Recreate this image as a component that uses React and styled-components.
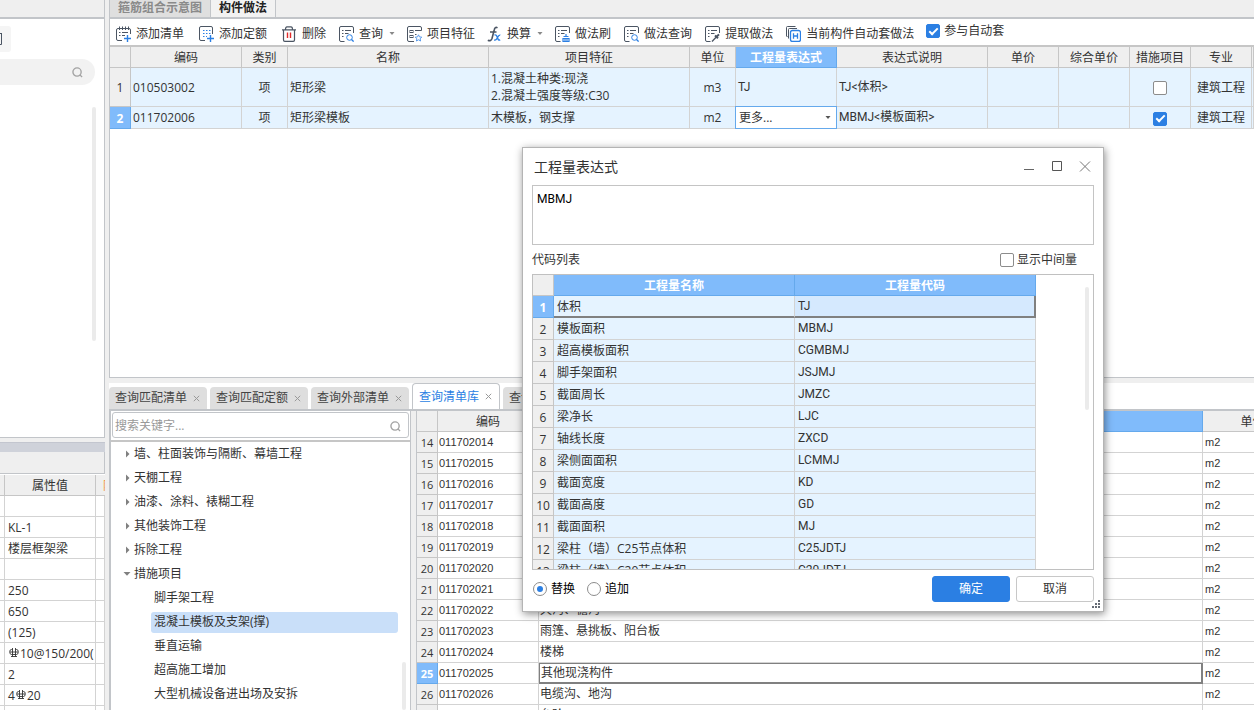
import React, { useState } from "react";
import styled, { createGlobalStyle, css } from "styled-components";

const uiFont = '"Open Sans", "Noto Sans CJK SC", sans-serif';
const codeFont = 'Roboto, "Noto Sans CJK SC", sans-serif';
const gridFont = '"Liberation Sans", "Noto Sans CJK SC", sans-serif';

const color = {
  chrome: "#efefef",
  frame: "#c2c5c9",
  line: "#d3d3d3",
  headLine: "#c6c6c6",
  row: "#e5f3ff",
  active: "#80bbfb",
  activeLine: "#65a9ec",
  primary: "#2b7fe3",
  text: "#333333",
  icon: "#4b5563",
};

const GlobalStyle = createGlobalStyle`
  *, *::before, *::after { box-sizing: border-box; }
  body { margin: 0; overflow: hidden; }
  body, button, input, select, textarea {
    font-family: ${uiFont};
    font-size: 12px;
    line-height: 16px;
    color: ${color.text};
  }
  button { border: 0; padding: 0; background: none; white-space: nowrap; }
`;

const Page = styled.div`
  display: grid;
  grid-template-columns: 105px minmax(0, 1fr);
  column-gap: 4px;
  height: 100vh;
  overflow: hidden;
  background: ${color.chrome};
`;

/* ---------- left column ---------- */
const Side = styled.aside`
  display: grid;
  grid-template-rows: minmax(0, 438fr) minmax(0, 268fr);
  row-gap: 4px;
  min-height: 0;
`;
const SidePanel = styled.section`
  display: flex;
  flex-direction: column;
  overflow: hidden;
  background: #fff;
  border: solid ${color.frame};
  border-width: 0 1px 1px 0;
`;
const SideStrip = styled.div`
  flex: none;
  height: 19px;
  background: ${color.chrome};
  border-bottom: 2px solid ${color.frame};
`;
const SideTools = styled.div`
  display: flex;
  padding: 7px 0;
`;
const SideToolButton = styled.button`
  display: flex;
  align-items: center;
  width: 11px;
  height: 26px;
  border-radius: 0 3px 3px 0;
  background: #f5f5f5;
`;
const SideSearch = styled.label`
  display: flex;
  align-items: center;
  flex: none;
  height: 26px;
  margin-right: 9px;
  padding-right: 12px;
  background: #f2f2f2;
  border-radius: 0 13px 13px 0;
  input {
    flex: 1;
    min-width: 0;
    border: 0;
    background: none;
    outline: none;
  }
`;
const SideScroll = styled.div`
  flex: 1;
  display: flex;
  justify-content: flex-end;
  padding: 22px 8px 96px 0;
`;
const Thumb = styled.div`
  width: 4px;
  height: ${(p) => p.$length || "100%"};
  border-radius: 2px;
  background: #ebebeb;
`;
const SideProps = styled.section`
  overflow: hidden;
  background: #fff;
`;
const Band = styled.div`
  height: 10px;
  background: #cfd2da;
  border-top: 1px solid #c3c6cf;
`;
const BandBody = styled.div`
  height: 22px;
  border: solid ${color.frame};
  border-width: 0 1px 1px 0;
  margin-bottom: 1px;
  background: ${color.chrome};
`;

/* ---------- data tables ---------- */
const Table = styled.table`
  width: ${(p) => p.$width || "100%"};
  table-layout: fixed;
  border-collapse: separate;
  border-spacing: 0;
  font-family: ${(p) => p.$font || uiFont};
  font-size: 12px;
`;
const Head = styled.th`
  height: ${(p) => p.$h || 21}px;
  padding: 2px 0 0;
  overflow: hidden;
  white-space: nowrap;
  font-family: ${uiFont};
  font-size: 12px;
  font-weight: ${(p) => (p.$active ? 700 : 400)};
  color: ${(p) => (p.$active ? "#fff" : color.text)};
  background: ${(p) => (p.$active ? color.active : color.chrome)};
  border: solid ${(p) => (p.$active ? color.activeLine : color.headLine)};
  border-width: 0 1px 1px 0;
`;
const RequiredHead = styled(Head)`
  padding-left: 7px;
  text-align: left;
  color: #f0963c;
  border-right: 0;
`;
const RowHead = styled(Head)`
  font-size: ${(p) => p.$size || "12px"};
`;
const Cell = styled.td`
  height: ${(p) => p.$h || 21}px;
  padding: 0 0 0 ${(p) => p.$pad ?? 2}px;
  overflow: hidden;
  white-space: nowrap;
  line-height: 17px;
  text-align: ${(p) => (p.$center ? "center" : "left")};
  background: ${(p) => p.$bg || "#fff"};
  border: solid ${color.line};
  border-width: 0 1px 1px 0;
  ${(p) =>
    p.$code &&
    css`
      font-family: ${codeFont};
    `}
  ${(p) =>
    p.$current &&
    css`
      border-color: #808080;
      border-width: 1px 2px 2px 1px;
    `}
  ${(p) =>
    p.$under &&
    css`
      border-bottom: 2px solid #808080;
    `}
  ${(p) =>
    p.$edge &&
    css`
      border-right: 2px solid #808080;
    `}
`;
const Code = styled(Cell)`
  font-size: 11px;
`;
const DropCell = styled(Cell)`
  position: relative;
  padding: 0;
  overflow: visible;
  background: #fff;
  border-color: ${color.activeLine};
  box-shadow: -1px -1px 0 ${color.activeLine}, 0 -1px 0 ${color.activeLine}, -1px 0 0 ${color.activeLine};
`;
const DropField = styled.div`
  display: flex;
  align-items: center;
  padding-right: 5px;
  select {
    flex: 1;
    min-width: 0;
    height: 20px;
    padding: 0 0 0 3px;
    border: 0;
    outline: none;
    appearance: none;
    background: transparent;
  }
`;

/* ---------- controls ---------- */
const Check = styled.input`
  appearance: none;
  display: inline-grid;
  place-items: center;
  width: 14px;
  height: 14px;
  margin: 0;
  border: 1px solid #8c8c8c;
  border-radius: 2px;
  background: #fff;
  vertical-align: middle;
  &:checked {
    border-color: ${color.primary};
    background: ${color.primary};
  }
  &:checked::after {
    content: "";
    width: 9px;
    height: 5px;
    border: solid #fff;
    border-width: 0 0 2px 2px;
    transform: translateY(-1px) rotate(-45deg);
  }
`;
const Radio = styled.input`
  appearance: none;
  display: grid;
  place-items: center;
  width: 14px;
  height: 14px;
  margin: 0;
  border: 1px solid #8c8c8c;
  border-radius: 50%;
  background: #fff;
  &:checked::after {
    content: "";
    width: 6px;
    height: 6px;
    border-radius: 50%;
    background: ${color.primary};
  }
`;
const Field = styled.label`
  display: flex;
  align-items: center;
  gap: ${(p) => p.$gap || 4}px;
  color: ${(p) => p.$color || color.text};
`;

/* ---------- main area ---------- */
const Main = styled.main`
  display: grid;
  grid-template-rows: minmax(0, 378fr) minmax(0, 327fr);
  row-gap: 5px;
  min-width: 0;
  min-height: 0;
`;
const TopPane = styled.section`
  display: flex;
  flex-direction: column;
  overflow: hidden;
  background: #fff;
  border: solid ${color.frame};
  border-width: 0 0 1px 1px;
`;
const ViewTabs = styled.div`
  flex: none;
  display: flex;
  height: 19px;
  background: ${color.chrome};
  border-bottom: 2px solid ${color.frame};
`;
const ViewTab = styled.button`
  padding: 0 8px 4px;
  font-weight: 700;
  border-right: 1px solid ${color.frame};
  color: ${(p) => (p.$on ? "#222" : "#8a8a8a")};
  background: ${(p) => (p.$on ? "#f2f2f2" : "#dfdfdf")};
`;
const Toolbar = styled.div`
  flex: none;
  display: flex;
  align-items: center;
  gap: 12px;
  height: 28px;
  padding: 3px 0 0 5px;
  white-space: nowrap;
  border-bottom: 2px solid ${color.headLine};
`;
const ToolGroup = styled.div`
  display: flex;
  gap: ${(p) => p.$gap}px;
`;
const ToolButton = styled.button`
  display: flex;
  align-items: center;
  gap: 5px;
  height: 20px;
`;
const ToolArrow = styled.span`
  padding-left: 1px;
  display: flex;
`;
const ToolCheck = styled(Field)`
  align-self: flex-start;
  padding-top: 1px;
`;

const BottomPane = styled.section`
  display: flex;
  flex-direction: column;
  min-height: 0;
  overflow: hidden;
  background: #fff;
`;
const QueryTabs = styled.div`
  flex: none;
  display: flex;
  align-items: flex-end;
  gap: 3px;
  height: 28px;
  border-bottom: 2px solid ${color.frame};
`;
const QueryTab = styled.div`
  display: flex;
  align-items: center;
  gap: 6px;
  height: ${(p) => (p.$on ? 26 : 22)}px;
  padding: 0 7px 0 6px;
  border-radius: 4px 4px 0 0;
  background: ${(p) => (p.$on ? "#fff" : "#dedede")};
  border: ${(p) => (p.$on ? `1px solid ${color.frame}` : "0")};
  border-bottom: 0;
  button { color: ${(p) => (p.$on ? color.primary : "#444")}; display: flex; }
`;
const Panes = styled.div`
  flex: 1;
  display: grid;
  grid-template-columns: 302px minmax(0, 1fr);
  gap: 5px;
  min-height: 0;
  background: ${color.chrome};
`;
const TreePane = styled.div`
  display: flex;
  flex-direction: column;
  overflow: hidden;
  background: #fff;
  border: solid ${color.frame};
  border-width: 0 1px 0 2px;
`;
const SearchRow = styled.div`
  flex: none;
  padding: 1px 1px 2px;
  border-bottom: 2px solid ${color.headLine};
`;
const SearchBox = styled.label`
  display: flex;
  align-items: center;
  height: 26px;
  padding: 2px 7px 0 2px;
  border: 1px solid ${color.frame};
  border-radius: 3px;
  input {
    flex: 1;
    min-width: 0;
    padding: 0;
    border: 0;
    outline: none;
  }
  input::placeholder { color: #999; opacity: 1; }
`;
const TreeArea = styled.div`
  display: flex;
  flex: 1;
  min-height: 0;
  overflow: hidden;
  padding-right: 4px;
`;
const Tree = styled.ul`
  flex: 1;
  margin: 0;
  padding: 0 4px 0 12px;
  list-style: none;
`;
const TreeItem = styled.li`
  display: flex;
  align-items: center;
  height: 24px;
  padding-left: ${(p) => (p.$child ? 28 : 0)}px;
`;
const TreeLabel = styled.span`
  flex: 1;
  display: flex;
  align-items: center;
  height: 21px;
  padding-left: 3px;
  border-radius: 3px;
  background: ${(p) => (p.$on ? "#c9dff9" : "none")};
`;
const TreeThumb = styled.div`
  display: flex;
  align-items: flex-end;
`;
const ResultPane = styled.div`
  overflow: hidden;
  background: #fff;
  border-left: 1px solid ${color.frame};
`;

/* ---------- dialog ---------- */
const Dialog = styled.section`
  position: absolute;
  left: 522px;
  top: 147px;
  width: 582px;
  padding: 0 9px 9px;
  background: #fff;
  border: 1px solid #b4b4b4;
  box-shadow: 1px 2px 8px rgba(0, 0, 0, 0.45);
`;
const TitleBar = styled.header`
  display: flex;
  align-items: center;
  justify-content: space-between;
  height: 37px;
  padding: 0 3px 0 2px;
  h2 { margin: 0; font-size: 14px; font-weight: 400; line-height: 20px; }
`;
const WindowButtons = styled.div`
  display: flex;
  gap: 16px;
  button { display: flex; }
`;
const Expression = styled.textarea`
  display: block;
  width: 100%;
  height: 60px;
  padding: 5px 4px;
  resize: none;
  font-family: ${codeFont};
  color: #000;
  border: 1px solid #c4c4c4;
  border-radius: 0;
  outline: none;
`;
const ListBar = styled.div`
  display: flex;
  align-items: center;
  justify-content: space-between;
  height: 29px;
  padding-right: 17px;
`;
const CodeList = styled.div`
  display: flex;
  justify-content: space-between;
  height: 296px;
  overflow: hidden;
  border: 1px solid #c0c0c0;
`;
const CodeScroll = styled.div`
  padding: 12px 4px 0 0;
`;
const Footer = styled.footer`
  display: flex;
  align-items: center;
  justify-content: space-between;
  padding-top: 6px;
`;
const Options = styled.div`
  display: flex;
  gap: 12px;
  padding-left: 1px;
`;
const Actions = styled.div`
  display: flex;
  gap: 6px;
`;
const ActionButton = styled.button`
  width: 78px;
  height: 26px;
  border-radius: 3px;
  border: 1px solid ${(p) => (p.$primary ? color.primary : "#c8c8c8")};
  background: ${(p) => (p.$primary ? color.primary : "#fff")};
  color: ${(p) => (p.$primary ? "#fff" : color.text)};
`;
const Grip = styled.svg`
  position: absolute;
  right: 3px;
  bottom: 3px;
`;

/* ---------- icons ---------- */
const Icon = ({ children, size = 16 }) => (
  <svg width={size} height={size} viewBox={`0 0 ${size} ${size}`} fill="none" stroke={color.icon} aria-hidden="true">
    {children}
  </svg>
);
const Lens = () => (
  <svg width="11" height="11" viewBox="0 0 12 12" fill="none" stroke="#a3a3a3" strokeWidth="1.5" aria-hidden="true">
    <circle cx="5.5" cy="5.5" r="4.5" />
    <path d="M8.6 8.6 L11 11" />
  </svg>
);
const sheet = "M6.5 15.5 H3 Q1.5 15.5 1.5 14 V2 Q1.5 .5 3 .5 H14 Q15.5 .5 15.5 2 V7";
const lines = "M4 4.5 H5.5 M7 4.5 H13 M4 7.5 H5.5 M7 7.5 H10.5 M4 10.5 H5.5";
const icons = {
  addList: (
    <Icon>
      <path d="M7 14.5 H3 Q1.5 14.5 1.5 13 V4 Q1.5 2.5 3 2.5 H14 Q15.5 2.5 15.5 4 V8" />
      <path d="M4.5 .5 V4 M7.5 .5 V4 M10.5 .5 V4 M13.5 .5 V4" />
      <path d="M4 6.5 H5.5 M7 6.5 H13 M4 9.5 H5.5 M7 9.5 H10" />
      <path d="M12.5 9 V16 M9 12.5 H16" stroke={color.primary} strokeWidth="1.4" />
    </Icon>
  ),
  addQuota: (
    <Icon>
      <path d="M7 14.5 H3 Q1.5 14.5 1.5 13 V2 Q1.5 .5 3 .5 H13 Q14.5 .5 14.5 2 V8" />
      <path d="M5 4.5 H13 M5 7.5 H13 M5 10.5 H9" strokeDasharray="1.5 1.5" stroke={color.primary} />
      <path d="M12.5 9 V16 M9 12.5 H16" stroke={color.primary} strokeWidth="1.4" />
    </Icon>
  ),
  remove: (
    <Icon>
      <path d="M4.5 3.5 Q4.5 .8 6 .8 H10 Q11.5 .8 11.5 3.5 M1 3.8 H15 M2.5 4 V14 Q2.5 15.3 3.8 15.3 H12.2 Q13.5 15.3 13.5 14 V4" strokeWidth="1.2" />
      <path d="M6.5 6.5 V12 M9.5 6.5 V12" stroke="#e02b2b" strokeWidth="1.4" />
    </Icon>
  ),
  query: (
    <Icon>
      <path d={sheet} />
      <path d={lines} />
      <circle cx="11.5" cy="11.5" r="2.8" fill="#fff" stroke={color.primary} />
      <path d="M13.5 13.5 L15.6 15.6" stroke={color.primary} strokeWidth="1.3" />
    </Icon>
  ),
  feature: (
    <Icon>
      <path d="M8 15.5 H3 Q1.5 15.5 1.5 14 V2 Q1.5 .5 3 .5 H14 Q15.5 .5 15.5 2 V4.5 H9" />
      <rect x="4" y="4.5" width="3" height="2" />
      <rect x="4" y="9.5" width="3" height="2" />
      <path d="M9 8.5 H10.5" />
      <path d="M12.5 8.8 L13.5 10.9 L15.8 11.2 L14.1 12.7 L14.6 15 L12.5 13.8 L10.4 15 L10.9 12.7 L9.2 11.2 L11.5 10.9 Z" fill="#fff" stroke="#5b9bea" />
    </Icon>
  ),
  convert: (
    <Icon>
      <path d="M11.5 1.8 Q9 .2 8.2 4 L6 12.5 Q5 15.6 1.8 14.2 M4 6 H10.5" strokeWidth="1.6" />
      <path d="M8.5 9 Q10.3 8.5 11 10.5 L12 13 Q12.6 14.6 14.2 13.8 M14.3 9.2 Q13 8.6 11.5 11.5 Q10 14.8 8.2 13.8" stroke={color.primary} strokeWidth="1.4" />
    </Icon>
  ),
  brush: (
    <Icon>
      <path d={sheet} />
      <path d={lines} />
      <path d="M12 8 V10.5 M9.5 10.5 H14.5 M9 15.5 V12.5 H15 V15.5 Z M11 13 V15 M13 13 V15" stroke={color.primary} strokeWidth="1.2" />
    </Icon>
  ),
  extract: (
    <Icon>
      <path d={sheet} />
      <path d={lines} />
      <path d="M8 15.5 L12.8 10.5" strokeWidth="1.3" />
      <path d="M11 9.5 L14 12.2 M12.5 10.8 L15 8.4" strokeWidth="2" />
    </Icon>
  ),
  auto: (
    <Icon>
      <path d="M2.5 10.5 H2 Q1.5 10.5 1.5 10 V1.5 Q1.5 .5 2.5 .5 H10.5 M3.5 12.5 V3.5 Q3.5 2.5 4.5 2.5 H12" />
      <rect x="5.5" y="4.5" width="10" height="11" rx="2" stroke={color.primary} strokeWidth="1.3" />
      <path d="M8.5 7.3 V12.8 M12.5 7.3 V12.8 M8.5 10 H12.5" stroke={color.primary} strokeWidth="1.3" />
    </Icon>
  ),
};
const DownArrow = ({ tone = "#888" }) => (
  <svg width="6" height="4" viewBox="0 0 6 4" fill={tone} aria-hidden="true">
    <path d="M.5 0 H5.5 L3 3 Z" />
  </svg>
);
const Cross = () => (
  <svg width="7" height="7" viewBox="0 0 7 7" stroke="#999" fill="none" aria-hidden="true">
    <path d="M.8 .8 L6.2 6.2 M6.2 .8 L.8 6.2" />
  </svg>
);
const TreeArrow = ({ open }) => (
  <svg width="8" height="8" viewBox="0 0 8 8" fill="#808080" aria-hidden="true">
    {open ? <path d="M.5 2 H7.5 L4 5.8 Z" /> : <path d="M3 .5 L6.5 4 L3 7.5 Z" />}
  </svg>
);
const RebarMark = styled.svg`
  margin: 0 1px;
`;
const Rebar = () => (
  <RebarMark width="10" height="10" viewBox="0 0 10 10" fill="none" stroke={color.text} strokeWidth=".9" aria-hidden="true">
    <path d="M3.5 1.5 H2.5 Q.7 1.5 .7 3.8 Q.7 6.5 2.5 6.5 H7.5 Q9.3 6.5 9.3 3.8 Q9.3 1.5 7.5 1.5 H6.5 M1 4 H9 M3.5 0 V8.5 M6.5 0 V8.5 M2 8.5 H8" />
  </RebarMark>
);

/* ---------- data ---------- */
const properties = [
  "",
  "KL-1",
  "楼层框架梁",
  "",
  "250",
  "650",
  "(125)",
  <><Rebar />10@150/200(</>,
  "2",
  <>4<Rebar />20</>,
  <>4<Rebar />20</>,
];
const columns = [
  ["", 21],
  ["编码", 111],
  ["类别", 46],
  ["名称", 201],
  ["项目特征", 201],
  ["单位", 46],
  ["工程量表达式", 101],
  ["表达式说明", 151],
  ["单价", 71],
  ["综合单价", 71],
  ["措施项目", 61],
  ["专业", 61],
  ["", null],
];
const tree = [
  ["墙、柱面装饰与隔断、幕墙工程"],
  ["天棚工程"],
  ["油漆、涂料、裱糊工程"],
  ["其他装饰工程"],
  ["拆除工程"],
  ["措施项目", "open"],
  ["脚手架工程", "child"],
  ["混凝土模板及支架(撑)", "child"],
  ["垂直运输", "child"],
  ["超高施工增加", "child"],
  ["大型机械设备进出场及安拆", "child"],
];
const listNames = {
  22: "天沟、檐沟",
  23: "雨篷、悬挑板、阳台板",
  24: "楼梯",
  25: "其他现浇构件",
  26: "电缆沟、地沟",
  27: "台阶",
};
const results = Array.from({ length: 14 }, (_, i) => i + 14);
const codes = [
  ["体积", "TJ"],
  ["模板面积", "MBMJ"],
  ["超高模板面积", "CGMBMJ"],
  ["脚手架面积", "JSJMJ"],
  ["截面周长", "JMZC"],
  ["梁净长", "LJC"],
  ["轴线长度", "ZXCD"],
  ["梁侧面面积", "LCMMJ"],
  ["截面宽度", "KD"],
  ["截面高度", "GD"],
  ["截面面积", "MJ"],
  ["梁柱（墙）C25节点体积", "C25JDTJ"],
  ["梁柱（墙）C20节点体积", "C20JDTJ"],
];

const Tool = ({ icon, label, arrow }) => (
  <ToolButton type="button">
    {icons[icon]}
    {label}
    {arrow && <ToolArrow><DownArrow /></ToolArrow>}
  </ToolButton>
);

const CloseTab = ({ label, on }) => (
  <QueryTab $on={on}>
    <button type="button">{label}</button>
    <button type="button" aria-label={`关闭${label}`}><Cross /></button>
  </QueryTab>
);

function SideColumn() {
  return (
    <Side>
      <SidePanel>
        <SideStrip />
        <SideTools>
          <SideToolButton type="button" aria-label="复制">
            <svg width="3" height="14" viewBox="0 0 3 14" fill="none" stroke={color.icon} aria-hidden="true">
              <path d="M0 1.5 H2 M1.5 1 V12.5 H0" />
            </svg>
          </SideToolButton>
        </SideTools>
        <SideSearch>
          <input type="text" aria-label="搜索构件" />
          <Lens />
        </SideSearch>
        <SideScroll><Thumb /></SideScroll>
      </SidePanel>
      <SideProps>
        <Band />
        <BandBody />
        <Table>
          <colgroup>
            <col style={{ width: 5 }} />
            <col style={{ width: 91 }} />
            <col />
          </colgroup>
          <thead>
            <tr><Head /><Head>属性值</Head><RequiredHead>附加</RequiredHead></tr>
          </thead>
          <tbody>
            {properties.map((value, i) => (
              <tr key={i}><Cell /><Cell $pad={3}>{value}</Cell><Cell /></tr>
            ))}
          </tbody>
        </Table>
      </SideProps>
    </Side>
  );
}

function PracticeTable() {
  const [measure, setMeasure] = useState([false, true]);
  const toggle = (i) => setMeasure(measure.map((m, k) => (k === i ? !m : m)));
  const box = (i) => (
    <Check type="checkbox" aria-label="措施项目" checked={measure[i]} onChange={() => toggle(i)} />
  );
  return (
    <Table>
      <colgroup>
        {columns.map(([, w], i) => <col key={i} style={w ? { width: w } : undefined} />)}
      </colgroup>
      <thead>
        <tr>
          {columns.map(([name], i) => <Head key={i} $active={i === 6}>{name}</Head>)}
        </tr>
      </thead>
      <tbody>
        <tr>
          <RowHead $h={39}>1</RowHead>
          <Cell $bg={color.row}>010503002</Cell>
          <Cell $bg={color.row} $center $pad={0}>项</Cell>
          <Cell $bg={color.row}>矩形梁</Cell>
          <Cell $bg={color.row}>1.混凝土种类:现浇<br />2.混凝土强度等级:C30</Cell>
          <Cell $bg={color.row} $center $pad={0}>m3</Cell>
          <Cell $bg={color.row} $code>TJ</Cell>
          <Cell $bg={color.row} $code>TJ&lt;体积&gt;</Cell>
          <Cell $bg={color.row} />
          <Cell $bg={color.row} />
          <Cell $bg={color.row} $center $pad={0}>{box(0)}</Cell>
          <Cell $bg={color.row} $center $pad={0}>建筑工程</Cell>
          <Cell $bg={color.row} />
        </tr>
        <tr>
          <RowHead $h={22} $active>2</RowHead>
          <Cell $bg={color.row}>011702006</Cell>
          <Cell $bg={color.row} $center $pad={0}>项</Cell>
          <Cell $bg={color.row}>矩形梁模板</Cell>
          <Cell $bg={color.row}>木模板，钢支撑</Cell>
          <Cell $bg={color.row} $center $pad={0}>m2</Cell>
          <DropCell>
            <DropField>
              <select aria-label="工程量表达式"><option>更多...</option></select>
              <DownArrow tone="#555" />
            </DropField>
          </DropCell>
          <Cell $bg={color.row} $code>MBMJ&lt;模板面积&gt;</Cell>
          <Cell $bg={color.row} />
          <Cell $bg={color.row} />
          <Cell $bg={color.row} $center $pad={0}>{box(1)}</Cell>
          <Cell $bg={color.row} $center $pad={0}>建筑工程</Cell>
          <Cell $bg={color.row} />
        </tr>
      </tbody>
    </Table>
  );
}

function ResultTable() {
  return (
    <Table $width="calc(100% + 49px)" $font={gridFont}>
      <colgroup>
        <col style={{ width: 21 }} />
        <col style={{ width: 101 }} />
        <col />
        <col style={{ width: 100 }} />
      </colgroup>
      <thead>
        <tr><Head /><Head>编码</Head><Head $active>名称</Head><Head>单位</Head></tr>
      </thead>
      <tbody>
        {results.map((n) => (
          <tr key={n}>
            <RowHead $size="11px" $active={n === 25}>{n}</RowHead>
            <Code $pad={1}>0117020{n}</Code>
            <Cell $pad={1} $current={n === 25}>{listNames[n] || ""}</Cell>
            <Code>m2</Code>
          </tr>
        ))}
      </tbody>
    </Table>
  );
}

function ExpressionDialog() {
  const [text, setText] = useState("MBMJ");
  const [mode, setMode] = useState("replace");
  return (
    <Dialog role="dialog" aria-label="工程量表达式">
      <TitleBar>
        <h2>工程量表达式</h2>
        <WindowButtons>
          <button type="button" aria-label="最小化">
            <Icon size={12}><path d="M1 8.5 H11" stroke="#666" /></Icon>
          </button>
          <button type="button" aria-label="最大化">
            <Icon size={12}><path d="M1.5 .5 H10.5 V9.5 H1.5 Z" stroke="#555" /></Icon>
          </button>
          <button type="button" aria-label="关闭">
            <Icon size={12}><path d="M1 .5 L11 10.5 M11 .5 L1 10.5" stroke="#777" /></Icon>
          </button>
        </WindowButtons>
      </TitleBar>
      <Expression aria-label="表达式" spellCheck={false} value={text} onChange={(e) => setText(e.target.value)} />
      <ListBar>
        <span>代码列表</span>
        <Field $gap={3}><Check type="checkbox" />显示中间量</Field>
      </ListBar>
      <CodeList>
        <div>
          <Table $width="503px">
            <colgroup>
              <col style={{ width: 21 }} />
              <col style={{ width: 241 }} />
              <col style={{ width: 241 }} />
            </colgroup>
            <thead>
              <tr><Head /><Head $active>工程量名称</Head><Head $active>工程量代码</Head></tr>
            </thead>
            <tbody>
              {codes.map(([name, code], i) => (
                <tr key={code}>
                  <RowHead $h={22} $active={i === 0}>{i + 1}</RowHead>
                  <Cell $h={22} $pad={3} $bg={color.row} $under={i === 0}>{name}</Cell>
                  <Cell $h={22} $pad={3} $code $bg={i === 0 ? "#d5e9fe" : color.row} $under={i === 0} $edge={i === 0}>
                    {code}
                  </Cell>
                </tr>
              ))}
            </tbody>
          </Table>
        </div>
        <CodeScroll><Thumb $length="123px" /></CodeScroll>
      </CodeList>
      <Footer>
        <Options>
          <Field $color="#000">
            <Radio type="radio" name="mode" checked={mode === "replace"} onChange={() => setMode("replace")} />替换
          </Field>
          <Field $color="#000">
            <Radio type="radio" name="mode" checked={mode === "append"} onChange={() => setMode("append")} />追加
          </Field>
        </Options>
        <Actions>
          <ActionButton type="button" $primary>确定</ActionButton>
          <ActionButton type="button">取消</ActionButton>
        </Actions>
      </Footer>
      <Grip width="8" height="8" viewBox="0 0 8 8" fill="#666c76" aria-hidden="true">
        <path d="M6 0 h2 v2 h-2 Z M3 3 h2 v2 h-2 Z M6 3 h2 v2 h-2 Z M0 6 h2 v2 h-2 Z M3 6 h2 v2 h-2 Z M6 6 h2 v2 h-2 Z" />
      </Grip>
    </Dialog>
  );
}

export default function App() {
  const [auto, setAuto] = useState(true);
  return (
    <>
      <GlobalStyle />
      <Page>
        <SideColumn />
        <Main>
          <TopPane>
            <ViewTabs>
              <ViewTab type="button">箍筋组合示意图</ViewTab>
              <ViewTab type="button" $on>构件做法</ViewTab>
            </ViewTabs>
            <Toolbar>
              <ToolGroup $gap={14}>
                <Tool icon="addList" label="添加清单" />
                <Tool icon="addQuota" label="添加定额" />
                <Tool icon="remove" label="删除" />
              </ToolGroup>
              <ToolGroup $gap={11}>
                <Tool icon="query" label="查询" arrow />
                <Tool icon="feature" label="项目特征" />
                <Tool icon="convert" label="换算" arrow />
                <Tool icon="brush" label="做法刷" />
              </ToolGroup>
              <ToolGroup $gap={12}>
                <Tool icon="query" label="做法查询" />
                <Tool icon="extract" label="提取做法" />
                <Tool icon="auto" label="当前构件自动套做法" />
              </ToolGroup>
              <ToolCheck>
                <Check type="checkbox" checked={auto} onChange={() => setAuto(!auto)} />参与自动套
              </ToolCheck>
            </Toolbar>
            <PracticeTable />
          </TopPane>
          <BottomPane>
            <QueryTabs>
              <CloseTab label="查询匹配清单" />
              <CloseTab label="查询匹配定额" />
              <CloseTab label="查询外部清单" />
              <CloseTab label="查询清单库" on />
              <CloseTab label="查询定额库" />
            </QueryTabs>
            <Panes>
              <TreePane>
                <SearchRow>
                  <SearchBox>
                    <input type="text" aria-label="搜索关键字" placeholder="搜索关键字..." />
                    <Lens />
                  </SearchBox>
                </SearchRow>
                <TreeArea>
                  <Tree>
                    {tree.map(([label, kind]) => (
                      <TreeItem key={label} $child={kind === "child"}>
                        {kind !== "child" && <TreeArrow open={kind === "open"} />}
                        <TreeLabel $on={label.startsWith("混凝土")}>{label}</TreeLabel>
                      </TreeItem>
                    ))}
                  </Tree>
                  <TreeThumb><Thumb $length="48px" /></TreeThumb>
                </TreeArea>
              </TreePane>
              <ResultPane><ResultTable /></ResultPane>
            </Panes>
          </BottomPane>
        </Main>
      </Page>
      <ExpressionDialog />
    </>
  );
}
